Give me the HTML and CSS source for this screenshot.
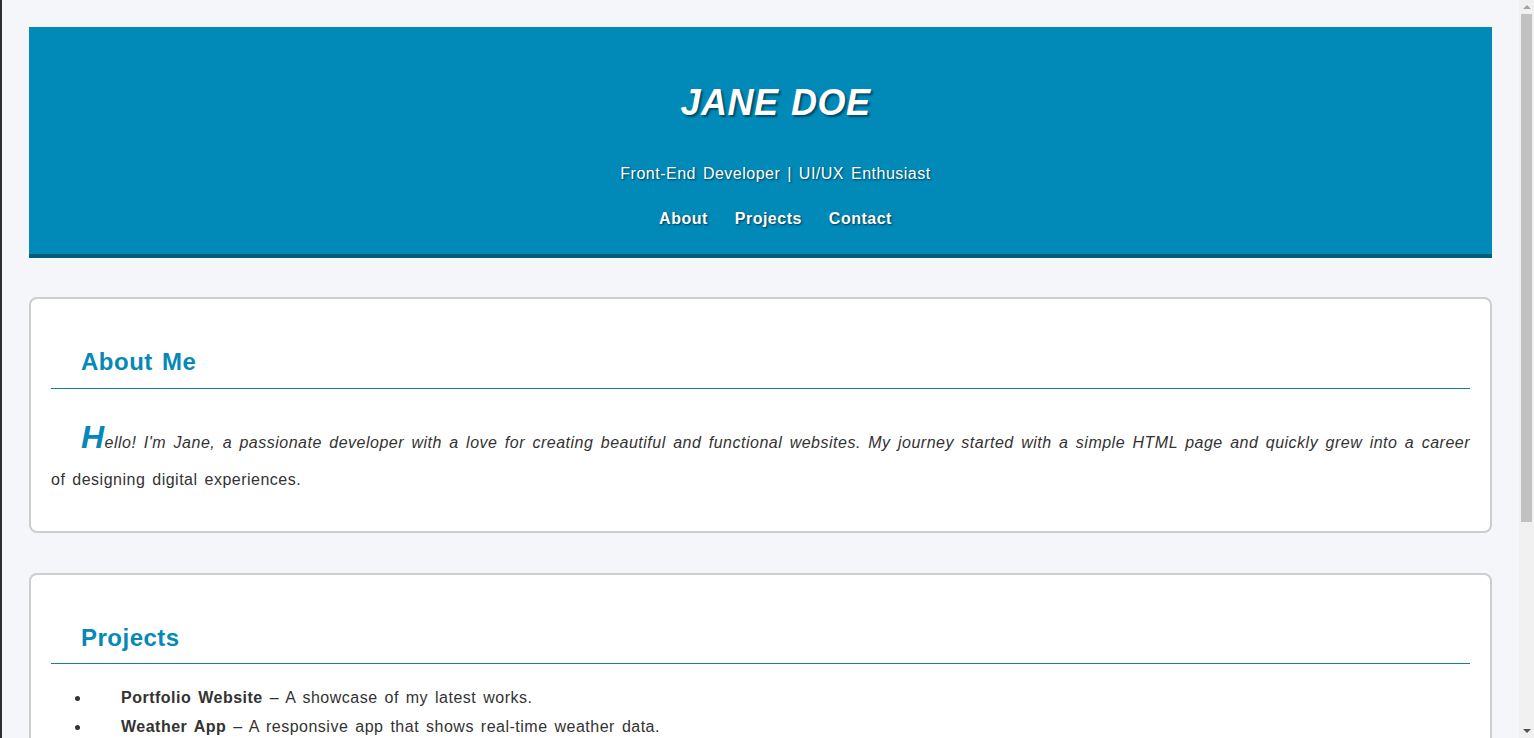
FILE: index.html
```html
<!DOCTYPE html>
<html lang="en">
<head>
<meta charset="utf-8">
<title>Jane Doe</title>
<link rel="stylesheet" href="styles.css">
</head>
<body>
<header class="site-header">
  <h1 class="site-title">JANE DOE</h1>
  <p class="site-subtitle">Front-End Developer | UI/UX Enthusiast</p>
  <nav class="site-nav">
    <a href="#about" class="nav-link">About</a>
    <a href="#projects" class="nav-link">Projects</a>
    <a href="#contact" class="nav-link">Contact</a>
  </nav>
</header>
<main class="content">
  <section class="card" id="about">
    <h2 class="card-title">About Me</h2>
    <p class="intro">Hello! I'm Jane, a passionate developer with a love for creating beautiful and functional websites. My journey started with a simple HTML page and quickly grew into a career of designing digital experiences.</p>
  </section>
  <section class="card" id="projects">
    <h2 class="card-title">Projects</h2>
    <ul class="project-list">
      <li><strong>Portfolio Website</strong> – A showcase of my latest works.</li>
      <li><strong>Weather App</strong> – A responsive app that shows real-time weather data.</li>
      <li><strong>Task Manager</strong> – A simple tool to organize daily to-dos.</li>
    </ul>
  </section>
  <section class="card" id="contact">
    <h2 class="card-title">Contact</h2>
    <p class="contact-text">Email me at jane.doe@example.com or connect with me on LinkedIn.</p>
  </section>
</main>
<div class="scrollbar" aria-hidden="true">
  <div class="sb-btn sb-up"><span class="sb-arrow-up"></span></div>
  <div class="sb-track"><div class="sb-thumb"></div></div>
  <div class="sb-btn sb-down"><span class="sb-arrow-down"></span></div>
</div>
</body>
</html>
```
FILE: styles.css
```css
html {
  border-left: 2px solid #2f2f2f;
  background: #f5f6f9;
}
body {
  margin: 0;
  padding: 27px 42px 27px 27px;
  font-family: "Liberation Sans", Arial, sans-serif;
  font-size: 16px;
  line-height: 1.8;
  letter-spacing: 0.5px;
  word-spacing: 2px;
  text-indent: 30px;
  color: #333;
  background: #f5f6f9;
}
.site-header {
  background: #0189b8;
  border-bottom: 4px solid #005f78;
  padding: 20px 20px 21px;
  text-align: center;
  color: #fff;
}
.site-title {
  margin: 24px 0;
  font-size: 36px;
  font-style: italic;
  font-weight: bold;
  text-shadow: 2px 2px 2px rgba(0, 0, 0, 0.45);
}
.site-subtitle {
  margin: 16px 0;
  text-shadow: 1px 1px 2px rgba(0, 0, 0, 0.55);
}
.site-nav {
  margin: 0;
}
.nav-link {
  color: #fff;
  font-weight: bold;
  text-decoration: none;
  margin: 0 10px;
  text-shadow: 1px 1px 2px rgba(0, 0, 0, 0.6);
}
.content {
  display: flex;
  flex-direction: column;
  gap: 40px;
  margin-top: 39px;
}
.card {
  background: #fff;
  border: 2px solid #cdcdcd;
  border-radius: 8px;
  padding: 20px;
}
.card-title {
  margin: 21px 0 20px;
  font-size: 24px;
  color: #0689b6;
  padding-bottom: 4px;
  border-bottom: 1px solid #1a7d98;
}
.intro {
  margin: 16px 0;
  text-align: justify;
}
.intro::first-line {
  font-style: italic;
}
.intro::first-letter {
  font-size: 2em;
  font-weight: bold;
  font-style: italic;
  color: #0689b6;
}
.project-list {
  margin: 16px 0;
  padding-left: 40px;
}
.contact-text {
  margin: 16px 0;
}
.scrollbar {
  position: fixed;
  top: 0;
  right: 0;
  width: 15px;
  height: 100vh;
  background: #f1f1f1;
  display: flex;
  flex-direction: column;
  text-indent: 0;
}
.sb-btn {
  height: 14px;
  display: flex;
  align-items: center;
  justify-content: center;
  flex: none;
}
.sb-arrow-up {
  width: 0;
  height: 0;
  border-left: 4px solid transparent;
  border-right: 4px solid transparent;
  border-bottom: 4px solid #a3a3a3;
}
.sb-arrow-down {
  width: 0;
  height: 0;
  border-left: 4px solid transparent;
  border-right: 4px solid transparent;
  border-top: 4px solid #505050;
}
.sb-track {
  flex: 1;
  padding: 0 2px;
}
.sb-thumb {
  height: 508px;
  background: #c1c1c1;
}
```
